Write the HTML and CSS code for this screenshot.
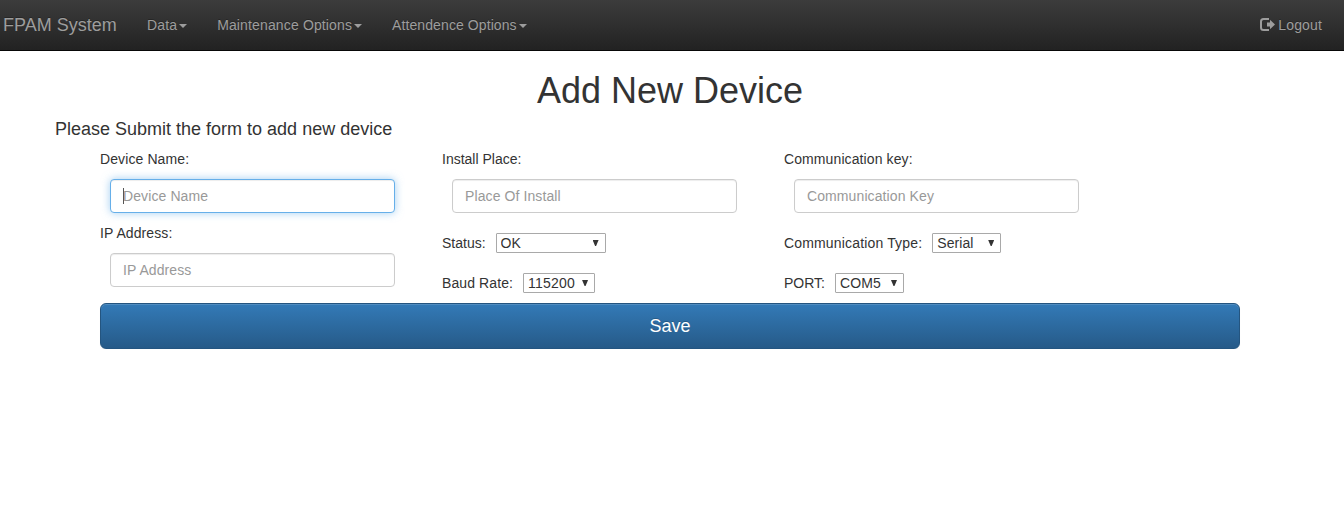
FILE: index.html
```html
<!DOCTYPE html>
<html lang="en">
<head>
<meta charset="utf-8">
<title>FPAM System</title>
<link rel="stylesheet" href="styles.css">
</head>
<body>
<nav class="navbar">
  <a class="brand">FPAM System</a>
  <ul class="menu">
    <li><a class="menu-link"><span>Data</span><b class="caret"></b></a></li>
    <li><a class="menu-link"><span>Maintenance Options</span><b class="caret"></b></a></li>
    <li><a class="menu-link"><span class="attendence">Attendence Options</span><b class="caret"></b></a></li>
  </ul>
  <a class="logout">
    <svg class="logout-icon" viewBox="0 0 15 13" width="15" height="13"><path d="M9 1H3.500Q1 1 1 3.500V9.500Q1 12 3.500 12H9" fill="none" stroke="currentColor" stroke-width="2"/><path d="M7 4.500H10V1.800L15 6.500L10 11.200V8.500H7Z" fill="currentColor"/></svg>
    <span>Logout</span>
  </a>
</nav>
<main class="container">
  <h1 class="title">Add New Device</h1>
  <h4 class="subtitle">Please Submit the form to add new device</h4>
  <form>
    <div class="columns">
      <div class="column">
        <label class="label" for="name">Device Name:</label>
        <div class="field"><input class="input input-active" id="name" placeholder="Device Name"><i class="cursor"></i></div>
        <label class="label" for="ip">IP Address:</label>
        <div class="field"><input class="input" id="ip" placeholder="IP Address"></div>
      </div>
      <div class="column">
        <label class="label place-label" for="place">Install Place:</label>
        <div class="field"><input class="input" id="place" placeholder="Place Of Install"></div>
        <div class="choice"><label class="status-label" for="status">Status:</label><div class="select-box status"><select class="select" id="status"><option>OK</option></select><i class="arrow"></i></div></div>
        <div class="choice"><label for="baud">Baud Rate:</label><div class="select-box baud"><select class="select" id="baud"><option>115200</option></select><i class="arrow"></i></div></div>
      </div>
      <div class="column">
        <label class="label" for="key">Communication key:</label>
        <div class="field"><input class="input" id="key" placeholder="Communication Key"></div>
        <div class="choice"><label class="type-label" for="type">Communication Type:</label><div class="select-box"><select class="select" id="type"><option>Serial</option></select><i class="arrow"></i></div></div>
        <div class="choice"><label class="port-label" for="port">PORT:</label><div class="select-box"><select class="select" id="port"><option>COM5</option></select><i class="arrow"></i></div></div>
      </div>
    </div>
    <button class="save" type="button">Save</button>
  </form>
</main>
</body>
</html>
```
FILE: styles.css
```css
* { box-sizing: border-box; }
body {
  margin: 0;
  background: #fff;
  color: #333;
  font: 14px/20px "Liberation Sans", Arial, sans-serif;
}
.navbar {
  display: flex;
  height: 51px;
  padding: 0 22px 0 3px;
  border-bottom: 1px solid #080808;
  background: linear-gradient(#3c3c3c, #222);
  color: #9d9d9d;
  text-shadow: 0 -1px 0 rgba(0, 0, 0, .25);
}
.brand {
  width: 129px;
  padding-top: 15px;
  font-size: 18px;
}
.menu {
  display: flex;
  margin: 0;
  padding: 0;
  list-style: none;
  letter-spacing: .14px;
}
.attendence { letter-spacing: .09px; }
.menu-link {
  display: flex;
  align-items: center;
  height: 50px;
  padding: 0 15px;
}
.caret {
  border: 4px solid transparent;
  border-top-color: currentColor;
  border-bottom: 0;
  margin: 1px 0 0 2px;
}
.logout {
  display: flex;
  gap: 3px;
  align-items: center;
  height: 50px;
  margin-left: auto;
  letter-spacing: .14px;
}
.logout-icon { margin-bottom: 2px; }
.container {
  width: 1140px;
  margin-left: 100px;
}
.title {
  margin: 20px 0 10px;
  font-size: 36px;
  font-weight: 400;
  line-height: 39px;
  text-align: center;
}
.subtitle {
  margin: 0 0 10px -45px;
  font-size: 18px;
  font-weight: 400;
  line-height: 19px;
}
.columns {
  display: flex;
  height: 154px;
  letter-spacing: .1px;
}
.column { width: 342px; }
.label { display: block; }
.type-label { letter-spacing: .16px; }
.place-label,
.status-label,
.port-label { letter-spacing: 0; }
.field {
  position: relative;
  width: 285px;
  margin: 10px 0 10px 10px;
}
.input {
  display: block;
  width: 100%;
  height: 34px;
  padding: 6px 12px;
  border: 1px solid #ccc;
  border-radius: 4px;
  background: #fff;
  box-shadow: inset 0 1px 1px rgba(0, 0, 0, .075);
  color: #555;
  font: inherit;
  letter-spacing: .1px;
}
.input::placeholder { color: #999; opacity: 1; }
.input-active {
  border-color: #66afe9;
  box-shadow: inset 0 1px 1px rgba(0, 0, 0, .075), 0 0 8px rgba(102, 175, 233, .6);
}
.cursor {
  position: absolute;
  top: 9px;
  left: 13px;
  width: 1px;
  height: 16px;
  background: #555;
}
.choice {
  display: flex;
  gap: 10px;
  height: 20px;
  margin: 20px 0;
}
.select-box {
  position: relative;
  width: 69px;
}
.status { width: 110px; }
.baud { width: 72px; }
.select {
  display: block;
  width: 100%;
  height: 20px;
  padding: 0 0 0 4px;
  border: 1px solid #a9a9a9;
  border-radius: 1px;
  appearance: none;
  background: #fff;
  color: #333;
  font: inherit;
  letter-spacing: .1px;
  line-height: 18px;
}
#baud { letter-spacing: .2px; }
.arrow {
  position: absolute;
  top: 7px;
  right: 7px;
  width: 6px;
  height: 6px;
  background: #333;
  clip-path: polygon(0 0, 100% 0, 58% 100%, 42% 100%);
}
.save {
  display: block;
  width: 100%;
  height: 46px;
  padding: 0;
  border: 1px solid #245580;
  border-radius: 6px;
  background: linear-gradient(#337ab7, #265a88);
  box-shadow: inset 0 1px 0 rgba(255, 255, 255, .15), 0 1px 1px rgba(0, 0, 0, .075);
  color: #fff;
  font: 18px/24px "Liberation Sans", Arial, sans-serif;
  text-shadow: 0 -1px 0 rgba(0, 0, 0, .2);
}
```
